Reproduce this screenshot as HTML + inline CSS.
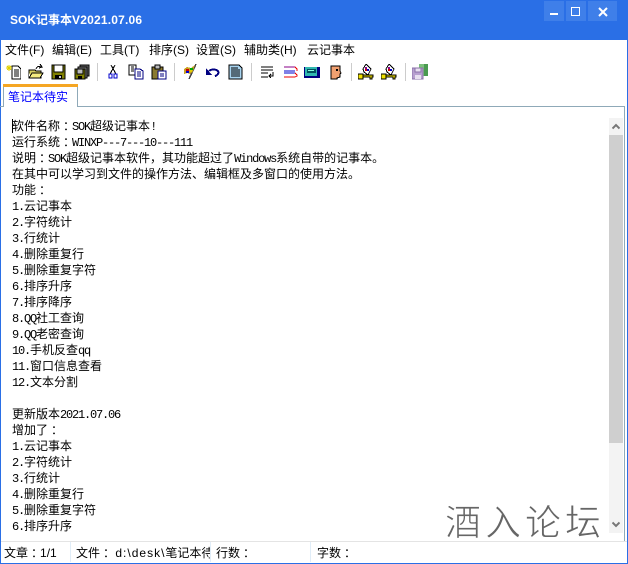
<!DOCTYPE html>
<html><head><meta charset="utf-8"><style>
html,body{margin:0;padding:0}
body{width:628px;height:564px;overflow:hidden;background:#fff;position:relative;font-family:"Liberation Sans","WenQuanYi Zen Hei","Noto Sans CJK SC",sans-serif;font-size:12px;color:#000}
.a{position:absolute}
#tb{left:0;top:0;width:628px;height:40px;background:#2a6fe6}
#title{left:10px;top:13px;color:#fff;font-weight:bold;font-size:12px;line-height:15px;white-space:nowrap}
.wb{top:1px;height:20px;background:#3f7fe9}
.m{top:43px;line-height:14px;white-space:nowrap;font-size:12px}
.sep{top:63px;width:1px;height:18px;background:#ccc}
svg.i{position:absolute;top:64px;width:16px;height:16px;shape-rendering:crispEdges}
#ed{left:0;top:106px;width:625px;height:435px;border-top:1px solid #8fa9b8;border-right:1px solid #8fa9b8;box-sizing:border-box}
.l{position:absolute;left:12px;line-height:16px;white-space:nowrap;font-size:12px;font-family:"WenQuanYi Zen Hei","Noto Sans CJK SC",monospace}
.l i{font-style:normal;font-size:12px;letter-spacing:-1.2px;font-family:"Liberation Mono",monospace}
.l b{font-weight:normal;position:relative;left:3px}
.s{top:546px;line-height:14px;white-space:nowrap;font-size:12px}
.s b{font-weight:normal;position:relative;left:3px}
.d{top:542px;width:1px;height:20px;background:#e0edf8}
</style></head><body>
<div class="a" id="tb"></div>
<div class="a" id="title">SOK记事本<span style="letter-spacing:.2px">V2021.07.06</span></div>
<div class="a wb" style="left:544px;width:20px"></div>
<div class="a wb" style="left:566px;width:20px"></div>
<div class="a wb" style="left:588px;width:29px"></div>
<div class="a" style="left:550px;top:13px;width:8px;height:2px;background:#fff"></div>
<div class="a" style="left:571px;top:7px;width:7px;height:7px;border:1px solid #fff"></div>
<svg class="a" style="left:598px;top:7px" width="10" height="10"><path d="M1 1l8 8M9 1l-8 8" stroke="#fff" stroke-width="2"/></svg>
<div class="a" style="left:0;top:40px;width:1px;height:524px;background:#2a6fe6"></div>
<div class="a" style="left:627px;top:40px;width:1px;height:524px;background:#2a6fe6"></div>
<div class="a" style="left:0;top:563px;width:628px;height:1px;background:#2a6fe6"></div>

<div class="a m" style="left:5px">文件(F)</div>
<div class="a m" style="left:52px">编辑(E)</div>
<div class="a m" style="left:100px">工具(T)</div>
<div class="a m" style="left:149px">排序(S)</div>
<div class="a m" style="left:196px">设置(S)</div>
<div class="a m" style="left:244px">辅助类(H)</div>
<div class="a m" style="left:307px">云记事本</div>

<svg class="i" style="left:5px" viewBox="0 0 16 16"><path d="M7 2h6l3 3v10H7z" fill="#fff" stroke="#000"/><path d="M9 6h5M9 8h5M9 10h5M9 12h5" stroke="#000"/><path d="M4 1v6M1 4h6M2 2l4 4M6 2l-4 4" stroke="#e0d000"/></svg>
<svg class="i" style="left:28px" viewBox="0 0 16 16"><path d="M1 14V6h6l1 1h5v7z" fill="#d8d060" stroke="#000"/><path d="M1 14V9l3 5" fill="#fff"/><path d="M1 14l3-5h11l-3 5z" fill="#f4ec80" stroke="#000"/><path d="M8 5c1-3 3-3 5-2M12 0l2 3-3 1" fill="none" stroke="#000"/></svg>
<svg class="i" style="left:51px" viewBox="0 0 16 16"><path d="M1 1h13v14H1z" fill="#808000" stroke="#000"/><path d="M3 1h9v7H3z" fill="#fff" stroke="#000"/><path d="M4 11h7v4H4z" fill="#000"/><path d="M8 12h2v2H8z" fill="#ccc"/></svg>
<svg class="i" style="left:74px" viewBox="0 0 16 16"><path d="M6 1h9v11H6z" fill="#666" stroke="#000"/><path d="M4 3h9v11H4z" fill="#808080" stroke="#000"/><path d="M1 5h10v10H1z" fill="#808000" stroke="#000"/><path d="M3 5h6v5H3z" fill="#bbb" stroke="#000"/><path d="M4 12h4v3H4z" fill="#000"/></svg>
<div class="a sep" style="left:97px"></div>
<svg class="i" style="left:105px" viewBox="0 0 16 16"><path d="M6 1l5 9M10 1l-5 9" stroke="#000" fill="none"/><path d="M4 10h3v4H4zM9 10h3v4H9z" fill="none" stroke="#00c" stroke-width="1"/></svg>
<svg class="i" style="left:128px" viewBox="0 0 16 16"><path d="M1 1h7v10H1z" fill="#fff" stroke="#000"/><path d="M3 3h3M3 5h3M3 7h3" stroke="#000"/><path d="M7 5h5l3 2v8H7z" fill="#fff" stroke="#000080"/><path d="M9 8h4M9 10h4M9 12h4" stroke="#000080"/></svg>
<svg class="i" style="left:151px" viewBox="0 0 16 16"><path d="M1 3h11v12H1z" fill="#8a7a30" stroke="#000"/><path d="M4 1h5v4H4z" fill="#bbb" stroke="#000"/><path d="M7 7h8v8H7z" fill="#fff" stroke="#000080"/><path d="M9 10h4M9 12h4" stroke="#000080"/></svg>
<div class="a sep" style="left:174px"></div>
<svg class="i" style="left:182px" viewBox="0 0 16 16"><path d="M7 15L14 0" stroke="#444" stroke-width="1.500"/><path d="M2 5l3-2 4 1 4-3-2 6-3 3-3-1-3 1z" fill="#c8a020"/><path d="M4 5h3v2H4z" fill="#c00"/><path d="M8 4h3v2H8z" fill="#0a0"/><path d="M4 7h3v2H4z" fill="#00c"/><path d="M8 6h2v2H8z" fill="#e0d000"/></svg>
<svg class="i" style="left:205px" viewBox="0 0 16 16"><path d="M4 7c2-2 7-2 9 0 1 2 0 4-3 5" fill="none" stroke="#000080" stroke-width="2"/><path d="M1 4v7h6z" fill="#000080"/></svg>
<svg class="i" style="left:228px" viewBox="0 0 16 16"><path d="M1 1h10l3 3v11H1z" fill="#a8d4f0" stroke="#000"/><path d="M3 4h7M3 6h9M3 8h9M3 10h9M3 12h9" stroke="#000"/></svg>
<div class="a sep" style="left:251px"></div>
<svg class="i" style="left:260px" viewBox="0 0 16 16"><path d="M1 3h12M1 6h12M1 9h7M1 13h7" stroke="#000"/><path d="M13 8v4H9M11 10l-2 2 2 2" fill="none" stroke="#000"/></svg>
<svg class="i" style="left:283px" viewBox="0 0 16 16"><path d="M1 3h11" stroke="#808"/><path d="M1 7h11M1 9h11" stroke="#00c"/><path d="M1 13h11" stroke="#e00"/><path d="M12 3l2 2v2M12 9l2 2v1l-2 1" fill="none" stroke="#e00"/></svg>
<svg class="i" style="left:304px" viewBox="0 0 16 16"><path d="M0 3h16v11H0z" fill="#000080"/><path d="M1 3h12v9H1z" fill="#30b8b0"/><path d="M3 5h9v4H3z" fill="#005060"/><path d="M4 6h6v1H4z" fill="#8fd"/></svg>
<svg class="i" style="left:328px" viewBox="0 0 16 16"><path d="M3 2h9v5l1 2-1 1v3l-3 1v1H3z" fill="#f0a070" stroke="#000"/><path d="M8 5h2v2H8z" fill="#000"/></svg>
<div class="a sep" style="left:351px"></div>
<svg class="i" style="left:358px" viewBox="0 0 16 16"><path d="M8 0l5 5-3 6-4-3-1-3z" fill="#fff" stroke="#000"/><path d="M7 3h2v2H7z" fill="#808"/><path d="M9 5h2v2H9z" fill="#00c"/><path d="M7 5h2v2H7z" fill="#c00"/><path d="M0 10h5v5H0z" fill="#f0e000" stroke="#000"/><path d="M5 11h10v2h-1v2h-2v-2H5z" fill="#f0e000" stroke="#000"/></svg>
<svg class="i" style="left:381px" viewBox="0 0 16 16"><path d="M8 0l5 5-3 6-4-3-1-3z" fill="#fff" stroke="#000"/><path d="M7 3h2v2H7z" fill="#808"/><path d="M9 5h2v2H9z" fill="#00c"/><path d="M7 5h2v2H7z" fill="#c00"/><path d="M0 10h5v5H0z" fill="#f0e000" stroke="#000"/><path d="M5 11h10v2h-1v2h-2v-2H5z" fill="#f0e000" stroke="#000"/></svg>
<div class="a sep" style="left:405px"></div>
<svg class="i" style="left:412px" viewBox="0 0 16 16"><path d="M7 0h9v12H7z" fill="#7cc07c"/><path d="M12 0h4v12h-4z" fill="#4a9a50"/><path d="M0 4h11v11H0z" fill="#b8a0d0" stroke="#8a70a8"/><path d="M3 4h6v4H3z" fill="#e8e0f0" stroke="#8a70a8"/><path d="M3 11h6v4H3z" fill="#e8e0f0"/></svg>

<div class="a" id="ed"></div>
<div class="a" style="left:3px;top:84px;width:75px;height:23px;background:#fff;border-left:1px solid #8fa9b8;border-right:1px solid #8fa9b8;box-sizing:border-box"></div>
<div class="a" style="left:3px;top:84px;width:75px;height:3px;background:#f5a623"></div>
<div class="a" style="left:8px;top:90px;color:#00f;font-size:12px;line-height:14px;white-space:nowrap">笔记本待实</div>
<div class="a" style="left:0;top:106px;width:4px;height:1px;background:#8fa9b8"></div>
<div class="a" style="left:12px;top:119px;width:1px;height:14px;background:#000"></div>

<div class="l" style="top:118px">软件名称<b>：</b><i>SOK</i>超级记事本<i>!</i></div>
<div class="l" style="top:134px">运行系统<b>：</b><i>WINXP---7---10---111</i></div>
<div class="l" style="top:150px">说明<b>：</b><i>SOK</i>超级记事本软件，其功能超过了<i>Windows</i>系统自带的记事本。</div>
<div class="l" style="top:166px">在其中可以学习到文件的操作方法、编辑框及多窗口的使用方法。</div>
<div class="l" style="top:182px">功能<b>：</b></div>
<div class="l" style="top:198px"><i>1.</i>云记事本</div>
<div class="l" style="top:214px"><i>2.</i>字符统计</div>
<div class="l" style="top:230px"><i>3.</i>行统计</div>
<div class="l" style="top:246px"><i>4.</i>删除重复行</div>
<div class="l" style="top:262px"><i>5.</i>删除重复字符</div>
<div class="l" style="top:278px"><i>6.</i>排序升序</div>
<div class="l" style="top:294px"><i>7.</i>排序降序</div>
<div class="l" style="top:310px"><i>8.QQ</i>社工查询</div>
<div class="l" style="top:326px"><i>9.QQ</i>老密查询</div>
<div class="l" style="top:342px"><i>10.</i>手机反查<i>qq</i></div>
<div class="l" style="top:358px"><i>11.</i>窗口信息查看</div>
<div class="l" style="top:374px"><i>12.</i>文本分割</div>
<div class="l" style="top:406px">更新版本<i>2021.07.06</i></div>
<div class="l" style="top:422px">增加了<b>：</b></div>
<div class="l" style="top:438px"><i>1.</i>云记事本</div>
<div class="l" style="top:454px"><i>2.</i>字符统计</div>
<div class="l" style="top:470px"><i>3.</i>行统计</div>
<div class="l" style="top:486px"><i>4.</i>删除重复行</div>
<div class="l" style="top:502px"><i>5.</i>删除重复字符</div>
<div class="l" style="top:518px"><i>6.</i>排序升序</div>

<div class="a" style="left:609px;top:118px;width:14px;height:415px;background:#f3f3f3"></div>
<div class="a" style="left:609px;top:135px;width:14px;height:308px;background:#cfcfcf"></div>
<svg class="a" style="left:612px;top:123px" width="8" height="7"><path d="M0.500 5.500L4 2l3.500 3.500" fill="none" stroke="#777" stroke-width="2"/></svg>
<svg class="a" style="left:612px;top:521px" width="8" height="7"><path d="M0.500 1.500L4 5l3.500-3.500" fill="none" stroke="#777" stroke-width="2"/></svg>

<div class="a" style="left:445px;top:498px;font-size:36px;line-height:44px;color:#666;font-family:'Noto Sans CJK SC',sans-serif;white-space:nowrap;letter-spacing:4px;-webkit-text-stroke:.8px #fff">酒入论坛</div>

<div class="a" style="left:1px;top:541px;width:626px;height:1px;background:#e4e4e4"></div>
<div class="a s" style="left:4px">文章<b>：</b>1/1</div>
<div class="a d" style="left:70px"></div>
<div class="a s" style="left:76px;width:134px;overflow:hidden">文件<b>：</b> <span style="letter-spacing:1px">d:\desk\</span>笔记本待实</div>
<div class="a d" style="left:210px"></div>
<div class="a s" style="left:216px">行数<b>：</b></div>
<div class="a d" style="left:310px"></div>
<div class="a s" style="left:317px">字数<b>：</b></div>
</body></html>
